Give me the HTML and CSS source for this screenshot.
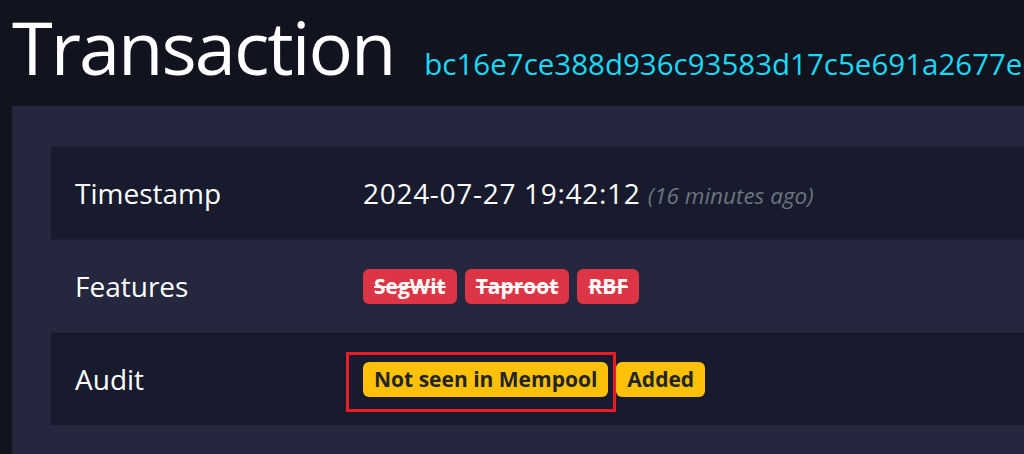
FILE: index.html
```html
<!DOCTYPE html>
<html lang="en">

<head>
    <meta charset="UTF-8">
    <meta name="viewport" content="width=device-width, initial-scale=1.0">
    <title>Transaction</title>
    <link rel="stylesheet" href="styles.css">
</head>

<body>
    <div class="title-block">
        <h1>Transaction</h1>
        <a class="txid" href="#">bc16e7ce388d936c93583d17c5e691a2677ee4b6a2a6f8c9d2e1f0a7b3c5d8e9</a>
    </div>

    <div class="box">
        <table class="details">
            <tbody>
                <tr>
                    <td class="label">Timestamp</td>
                    <td><span class="time">2024-07-27 19:42:12</span> <i class="ago">(16 minutes ago)</i></td>
                </tr>
                <tr>
                    <td class="label">Features</td>
                    <td>
                        <div class="badges">
                            <span class="badge badge-danger"><del>SegWit</del></span>
                            <span class="badge badge-danger"><del>Taproot</del></span>
                            <span class="badge badge-danger"><del>RBF</del></span>
                        </div>
                    </td>
                </tr>
                <tr>
                    <td class="label">Audit</td>
                    <td>
                        <div class="badges">
                            <span class="badge badge-warning marked">Not seen in Mempool</span>
                            <span class="badge badge-warning">Added</span>
                        </div>
                    </td>
                </tr>
            </tbody>
        </table>
    </div>
</body>

</html>
```

FILE: styles.css
```css
body {
    font-family: "Open Sans", "Noto Sans", sans-serif;
    margin: 0;
    background-color: #11131f;
    color: #fff;
    overflow: hidden;
    height: 100vh;
}

.title-block {
    display: flex;
    align-items: baseline;
    white-space: nowrap;
    padding-left: 12px;
    height: 106px;
}

h1 {
    font-size: 74px;
    font-weight: 400;
    letter-spacing: -2px;
    line-height: 94px;
    margin: 0;
}

.txid {
    margin-left: 30px;
    font-size: 29.5px;
    color: #1bd8f4;
    text-decoration: none;
}

.box {
    margin-left: 12px;
    width: 1400px;
    height: 400px;
    padding: 40px 0 0 39px;
    background-color: #24273e;
}

.details {
    width: 1300px;
    border-collapse: collapse;
    font-size: 28px;
}

.details td {
    height: 92px;
    padding: 0;
    vertical-align: middle;
    border-top: 1px solid #1f2236;
}

.details tr:nth-child(odd) {
    background-color: #181b2d;
}

.details .label {
    width: 288px;
    padding-left: 24px;
}

.time {
    letter-spacing: 0.7px;
}

.ago {
    font-size: 22.5px;
    color: #6c757d;
}

.badges {
    display: flex;
    align-items: center;
    gap: 8px;
}

.badge {
    font-size: 21px;
    font-weight: 700;
    line-height: 1;
    padding: 7px 11px;
    border-radius: 6px;
}

.badge-danger {
    background-color: #dc3545;
    color: #fff;
}

.badge-warning {
    background-color: #ffc107;
    color: #212529;
}

.marked {
    position: relative;
}

.marked::after {
    content: "";
    position: absolute;
    top: -10px;
    right: -8px;
    bottom: -15px;
    left: -17px;
    border: 3px solid #ed1c24;
}
```
